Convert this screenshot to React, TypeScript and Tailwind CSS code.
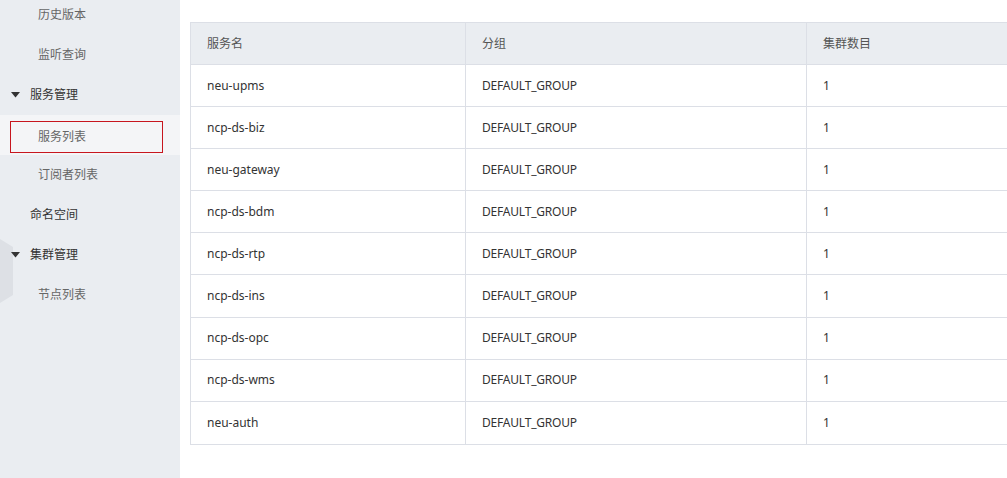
import React from "react";

const rows = [
  "neu-upms",
  "ncp-ds-biz",
  "neu-gateway",
  "ncp-ds-bdm",
  "ncp-ds-rtp",
  "ncp-ds-ins",
  "ncp-ds-opc",
  "ncp-ds-wms",
  "neu-auth",
];

const Caret = () => (
  <svg width="9" height="6" viewBox="0 0 9 6" className="shrink-0">
    <path d="M0 0 L9 0 L4.5 5.5 Z" fill="#333" />
  </svg>
);

export default function App() {
  const font = { fontFamily: '"Noto Sans", "Noto Sans CJK SC", sans-serif' };
  return (
    <div className="flex w-[1007px] h-[478px] overflow-hidden bg-white text-[12px]" style={font}>
      <aside className="relative w-[180px] shrink-0 bg-[#eaedf1] text-[#666]">
        <svg className="absolute left-0 top-[239px]" width="14" height="64" viewBox="0 0 14 64">
          <polygon points="-20,10 0,0 13,8 13,56 0,64 -20,54" fill="#dde0e5" />
        </svg>
        <div className="relative -mt-[5px] flex flex-col">
          <div className="h-10 flex items-center pl-[38px]">历史版本</div>
          <div className="h-10 flex items-center pl-[38px]">监听查询</div>
          <div className="h-10 flex items-center pl-[11px] gap-[10px] text-[#333]">
            <Caret />
            <span>服务管理</span>
          </div>
          <div className="h-10 flex items-start pt-[6px] bg-[#f4f5f7] px-[10px]">
            <div className="w-[153px] h-[32px] border border-[#c7161e] flex items-center pl-[27px]">服务列表</div>
          </div>
          <div className="h-10 flex items-center pl-[38px]">订阅者列表</div>
          <div className="h-10 flex items-center pl-[30px] text-[#333]">命名空间</div>
          <div className="h-10 flex items-center pl-[11px] gap-[10px] text-[#333]">
            <Caret />
            <span>集群管理</span>
          </div>
          <div className="h-10 flex items-center pl-[38px]">节点列表</div>
        </div>
      </aside>
      <main className="flex-1 pl-[10px] pt-[22px]">
        <div className="w-[900px] border border-[#dcdfe6] text-[#333]">
          <div className="grid grid-cols-[275px_341px_1fr] h-[42px] bg-[#eaedf1] border-b border-[#dcdfe6] text-[#555]">
            <div className="flex items-center pl-4 border-r border-[#dcdfe6]">服务名</div>
            <div className="flex items-center pl-4 border-r border-[#dcdfe6]">分组</div>
            <div className="flex items-center pl-4">集群数目</div>
          </div>
          {rows.map((r, i) => (
            <div
              key={r}
              className={`grid grid-cols-[275px_341px_1fr] h-[42.1px] ${i < rows.length - 1 ? "border-b border-[#dcdfe6]" : ""}`}
            >
              <div className="flex items-center pl-4 border-r border-[#dcdfe6]">{r}</div>
              <div className="flex items-center pl-4 border-r border-[#dcdfe6] tracking-[-0.2px]">DEFAULT_GROUP</div>
              <div className="flex items-center pl-4">1</div>
            </div>
          ))}
        </div>
      </main>
    </div>
  );
}
